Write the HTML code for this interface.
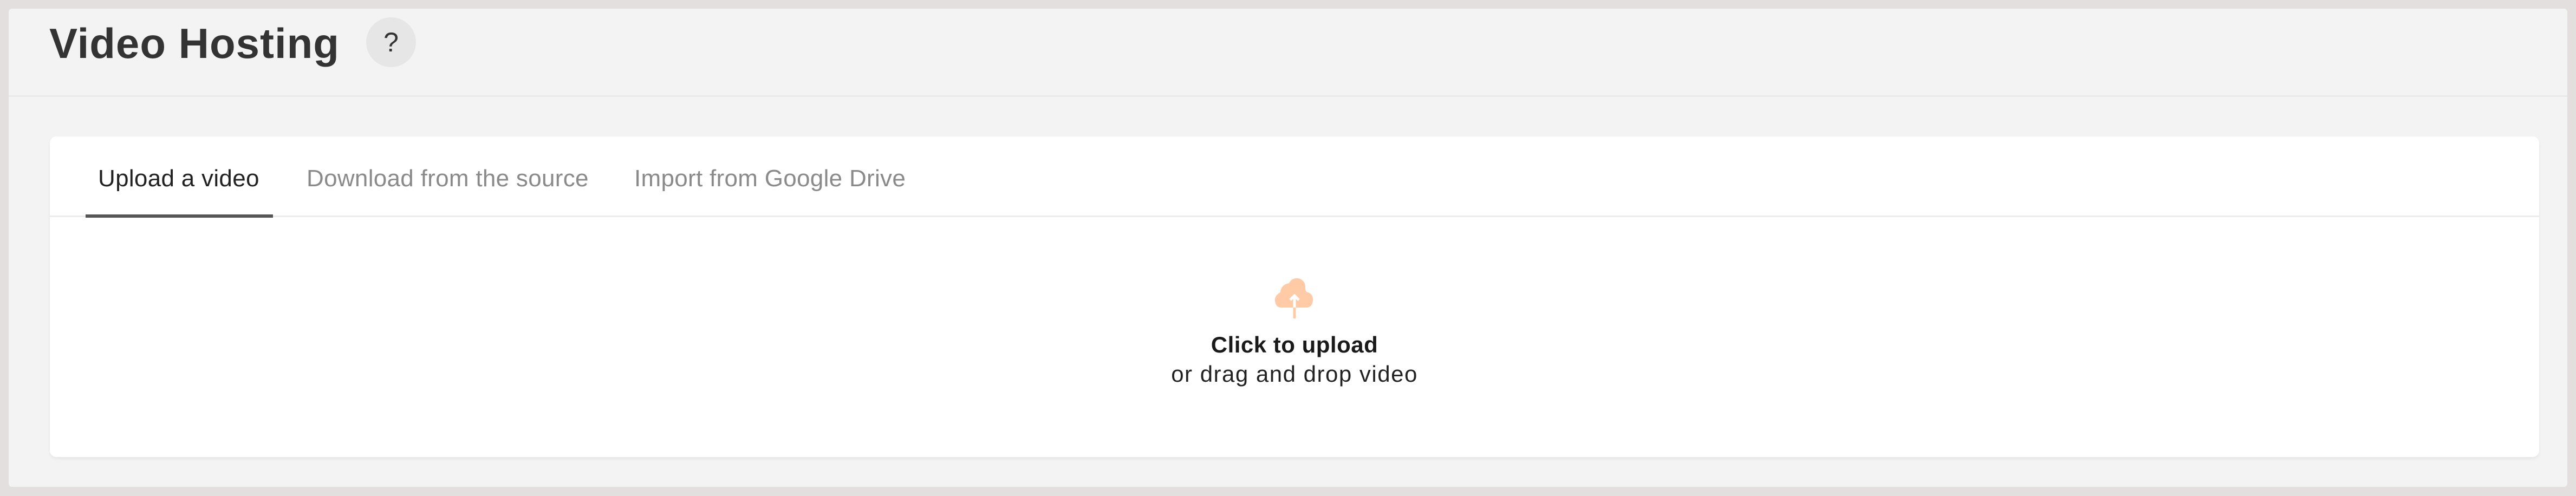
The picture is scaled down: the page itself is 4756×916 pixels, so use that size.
<!DOCTYPE html>
<html><head><meta charset="utf-8"><style>
html,body{margin:0;padding:0;width:4756px;height:916px;overflow:hidden;background:#e3dfde;font-family:"Liberation Sans",Arial,sans-serif}
.frame{position:absolute;left:16px;top:16px;width:4724px;height:883px;background:#f3f3f3;border-radius:6px}
.title{position:absolute;left:91px;top:30px;font-size:78px;font-weight:bold;color:#333;letter-spacing:1px;line-height:100px}
.help{position:absolute;left:676px;top:32px;width:92px;height:92px;border-radius:50%;background:#e6e6e6;color:#333;font-size:50px;text-align:center;line-height:92px}
.hline{position:absolute;left:16px;top:176px;width:4724px;height:3px;background:#e9e9e9}
.card{position:absolute;left:92px;top:252px;width:4596px;height:592px;background:#fff;border-radius:12px;box-shadow:0 3px 6px rgba(0,0,0,0.06)}
.tabline{position:absolute;left:0;top:146px;width:100%;height:3px;background:#ececec}
.tab{position:absolute;top:48px;font-size:44px;line-height:60px;color:#8a8a8a;letter-spacing:0.3px}
.act{color:#222}
.ul{position:absolute;left:66px;top:144px;width:346px;height:6px;background:#555}
.t1{position:absolute;left:0;width:100%;top:360px;text-align:center;font-size:42px;font-weight:bold;color:#1a1a1a;line-height:50px;letter-spacing:0.5px}
.t2{position:absolute;left:0;width:100%;top:414px;text-align:center;font-size:42px;color:#222;line-height:50px;letter-spacing:1.5px}
</style></head><body>
<div class="frame"></div>
<div class="title">Video Hosting</div>
<div class="help">?</div>
<div class="hline"></div>
<div class="card">
 <div class="tabline"></div>
 <div class="tab act" style="left:89px">Upload a video</div>
 <div class="tab" style="left:474px">Download from the source</div>
 <div class="tab" style="left:1079px">Import from Google Drive</div>
 <div class="ul"></div>
 <svg style="position:absolute;left:2260px;top:260px" width="76" height="80" viewBox="0 0 76 80">
  <path fill="#ffcba6" d="M14 56 C4 56 2 48 2 42 C2 34 8 30 12 28 C12 18 20 12 28 11 C32 3 38 2 43 2 C52 2 58 10 58 17 C58 22 58 24 60 27 C68 29 72 34 72 41 C72 50 68 56 60 56 Z"/>
  <path d="M38 76 V36 M30 42 L38 34 L46 42" stroke="#fff" stroke-width="5" fill="none"/>
  <path d="M38 76 V56" stroke="#ffcba6" stroke-width="5"/>
 </svg>
 <div class="t1">Click to upload</div>
 <div class="t2">or drag and drop video</div>
</div>
</body></html>
